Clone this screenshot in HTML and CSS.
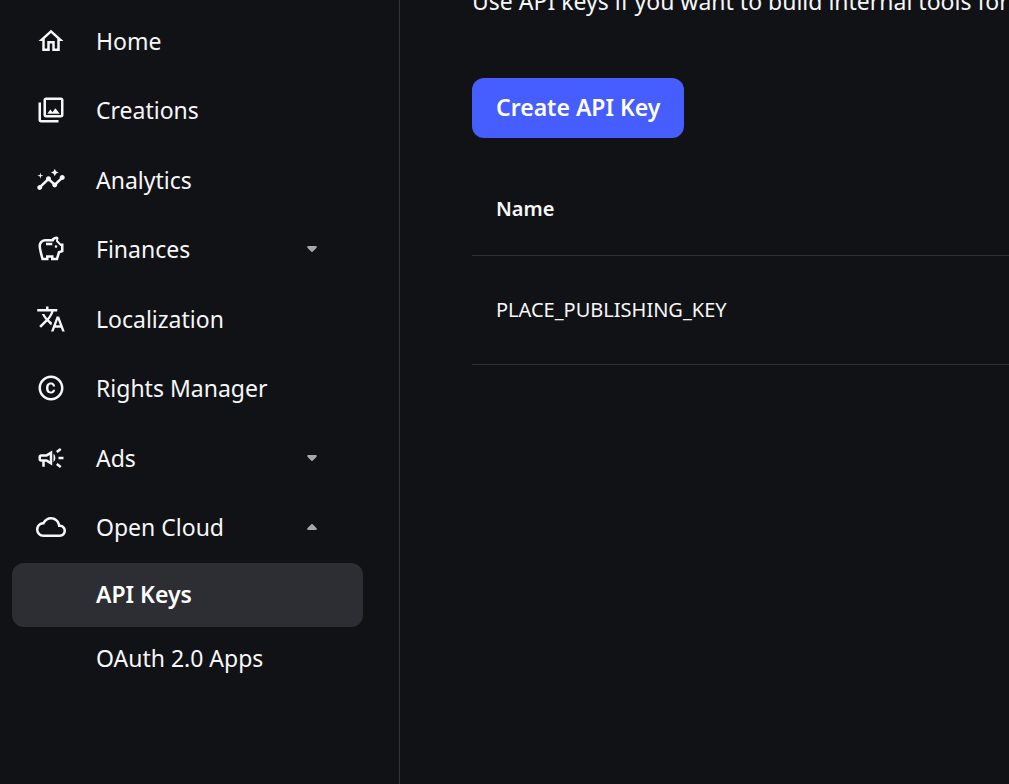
FILE: index.html
```html
<!DOCTYPE html>
<html lang="en">
<head>
<meta charset="utf-8">
<meta name="viewport" content="width=device-width, initial-scale=1">
<title>API Keys</title>
<link rel="stylesheet" href="styles.css">
</head>
<body>
<div class="layout">
  <nav class="sidebar" aria-label="Main">
    <ul class="menu">
      <li><a class="menu-item" href="#home"><svg class="icon" viewBox="0 0 24 24" aria-hidden="true"><path d="M12 5.69l5 4.5V18h-2v-6H9v6H7v-7.81l5-4.5M12 3L2 12h3v8h6v-6h2v6h6v-8h3L12 3z"/></svg><span>Home</span></a></li>
      <li><a class="menu-item" href="#creations"><svg class="icon" viewBox="0 0 24 24" aria-hidden="true"><path d="M20 4v12H8V4h12m0-2H8c-1.1 0-2 .9-2 2v12c0 1.1.9 2 2 2h12c1.1 0 2-.9 2-2V4c0-1.1-.9-2-2-2zM9 15l2.5-3.4 1.7 2.2 2.3-3.3L19 15zM2 6v14c0 1.1.9 2 2 2h14v-2H4V6H2z"/></svg><span>Creations</span></a></li>
      <li><a class="menu-item" href="#analytics"><svg class="icon" viewBox="0 0 24 24" aria-hidden="true"><path d="M21 8c-1.45 0-2.26 1.44-1.93 2.51l-3.55 3.56c-.3-.09-.74-.09-1.04 0l-2.55-2.55C12.27 10.45 11.46 9 10 9c-1.45 0-2.27 1.44-1.93 2.52l-4.56 4.55C2.44 15.74 1 16.55 1 18c0 1.1.9 2 2 2 1.45 0 2.26-1.44 1.93-2.51l4.55-4.56c.3.09.74.09 1.04 0l2.55 2.55C12.73 16.55 13.54 18 15 18c1.45 0 2.27-1.44 1.93-2.52l3.56-3.55c1.07.33 2.51-.48 2.51-1.93 0-1.1-.9-2-2-2z"/><path d="M15 9l.94-2.07L18 6l-2.06-.93L15 3l-.92 2.07L12 6l2.08.93zM3.5 11L4 9l2-.5L4 8l-.5-2L3 8l-2 .5L3 9z"/></svg><span>Analytics</span></a></li>
      <li><button class="menu-item" type="button" aria-expanded="false"><svg class="icon" viewBox="0 0 24 24" aria-hidden="true"><path d="M15 10c0-.55.45-1 1-1s1 .45 1 1-.45 1-1 1-1-.45-1-1zM8 9h5V7H8v2zm14-1.5v6.97l-2.82.94L17.5 21H12v-2h-2v2H4.5S2 12.54 2 9.5C2 6.46 4.46 4 7.5 4h5c.91-1.21 2.36-2 4-2 .83 0 1.5.67 1.5 1.5 0 .21-.04.4-.12.58-.14.34-.26.73-.32 1.15l2.27 2.27H22zm-2 2h-.5L16 6c0-.65.09-1.29.26-1.91-.97.25-1.76.93-2.19 1.91H7.5C5.57 6 4 7.57 4 9.5c0 1.88 1.22 6.65 2.01 9.5H8v-2h6v2h2.01l1.55-5.15 2.44-.82V9.5z"/></svg><span>Finances</span><svg class="caret" viewBox="0 0 10 6" aria-hidden="true"><path d="M1.2 0h7.6Q10.4.2 9.4 1.9L6.2 5.3Q5 6.5 3.8 5.3L.6 1.9Q-.4.2 1.2 0z"/></svg></button></li>
      <li><a class="menu-item" href="#localization"><svg class="icon" viewBox="0 0 24 24" aria-hidden="true"><path d="M12.87 15.07l-2.54-2.51.03-.03c1.74-1.94 2.98-4.17 3.71-6.53H17V4h-7V2H8v2H1v1.99h11.17C11.5 7.92 10.44 9.75 9 11.35 8.07 10.32 7.3 9.19 6.69 8h-2c.73 1.63 1.73 3.17 2.98 4.56l-5.09 5.02L4 19l5-5 3.11 3.11.76-2.04zM18.5 10h-2L12 22h2l1.12-3h4.75L21 22h2l-4.5-12zm-2.62 7l1.62-4.33L19.12 17h-3.24z"/></svg><span>Localization</span></a></li>
      <li><a class="menu-item" href="#rights"><svg class="icon" viewBox="0 0 24 24" aria-hidden="true"><path d="M10.08 10.86c.05-.33.16-.62.3-.87s.34-.46.59-.62c.24-.15.54-.22.91-.23.23.01.44.05.63.13.2.09.38.21.52.36s.25.33.34.53.13.42.14.64h1.79c-.02-.47-.11-.9-.28-1.29s-.4-.73-.7-1.01-.66-.5-1.08-.66-.88-.23-1.39-.23c-.65 0-1.22.11-1.7.34s-.88.53-1.2.92-.56.84-.71 1.36S8 11.29 8 11.87v.27c0 .58.08 1.12.23 1.64s.39.97.71 1.35.72.69 1.2.91c.48.22 1.05.34 1.7.34.47 0 .91-.08 1.32-.23s.77-.36 1.08-.63.56-.58.74-.94.29-.74.3-1.15h-1.79c-.01.21-.06.4-.15.58s-.21.33-.36.46-.32.23-.52.3c-.19.07-.39.09-.6.1-.36-.01-.66-.08-.89-.23-.25-.16-.45-.37-.59-.62s-.25-.55-.3-.88-.08-.67-.08-1v-.27c0-.35.03-.68.08-1.01zM12 2C6.48 2 2 6.48 2 12s4.48 10 10 10 10-4.48 10-10S17.52 2 12 2zm0 18c-4.41 0-8-3.59-8-8s3.59-8 8-8 8 3.59 8 8-3.59 8-8 8z"/></svg><span>Rights Manager</span></a></li>
      <li><button class="menu-item" type="button" aria-expanded="false"><svg class="icon" viewBox="0 0 24 24" aria-hidden="true"><path d="M18 11v2h4v-2h-4zm-2 6.61c.96.71 2.21 1.65 3.2 2.39.4-.53.8-1.07 1.2-1.6-.99-.74-2.24-1.68-3.2-2.4-.4.54-.8 1.08-1.2 1.61zM20.4 5.6c-.4-.53-.8-1.07-1.2-1.6-.99.74-2.24 1.68-3.2 2.4.4.53.8 1.07 1.2 1.6.96-.72 2.21-1.65 3.2-2.4zM4 9c-1.1 0-2 .9-2 2v2c0 1.1.9 2 2 2h1v4h2v-4h1l5 3V6L8 9H4zm5.03 1.71L11 9.53v4.94l-1.97-1.18-.48-.29H4v-2h4.55l.48-.29zM15.5 12c0-1.33-.58-2.53-1.5-3.35v6.69c.92-.81 1.5-2.01 1.5-3.34z"/></svg><span>Ads</span><svg class="caret" viewBox="0 0 10 6" aria-hidden="true"><path d="M1.2 0h7.6Q10.4.2 9.4 1.9L6.2 5.3Q5 6.5 3.8 5.3L.6 1.9Q-.4.2 1.2 0z"/></svg></button></li>
      <li><button class="menu-item" type="button" aria-expanded="true"><svg class="icon" viewBox="0 0 24 24" aria-hidden="true"><path d="M19.35 10.04C18.67 6.59 15.64 4 12 4 9.11 4 6.61 5.64 5.36 8.04 2.35 8.36 0 10.9 0 14c0 3.31 2.69 6 6 6h13c2.76 0 5-2.24 5-5 0-2.64-2.05-4.78-4.65-4.96zM19 18H6c-2.21 0-4-1.79-4-4 0-2.05 1.53-3.76 3.56-3.97l1.07-.11.5-.95C8.08 7.14 9.94 6 12 6c2.62 0 4.88 1.86 5.39 4.43l.3 1.5 1.53.11c1.56.1 2.78 1.41 2.78 2.96 0 1.65-1.35 3-3 3z"/></svg><span>Open Cloud</span><svg class="caret" viewBox="0 0 10 6" aria-hidden="true"><path d="M1.2 6h7.6Q10.4 5.8 9.4 4.1L6.2.7Q5-.5 3.8.7L.6 4.1Q-.4 5.8 1.2 6z"/></svg></button>
        <ul class="submenu">
          <li><a class="submenu-item is-active" href="#api-keys" aria-current="page">API Keys</a></li>
          <li><a class="submenu-item" href="#oauth">OAuth 2.0 Apps</a></li>
        </ul>
      </li>
    </ul>
  </nav>
  <main class="content">
    <p class="intro">Use API keys if you want to build internal tools for</p>
    <button class="create" type="button">Create API Key</button>
    <table class="keys">
      <thead><tr><th scope="col">Name</th></tr></thead>
      <tbody><tr><td>PLACE_PUBLISHING_KEY</td></tr></tbody>
    </table>
  </main>
</div>
</body>
</html>
```
FILE: styles.css
```css
* {
  box-sizing: border-box;
}

body {
  margin: 0;
  background: #111216;
  color: #f7f7f8;
  font-family: "Noto Sans", Roboto, sans-serif;
  font-size: 23px;
  line-height: 32px;
}

.layout {
  display: grid;
  grid-template-columns: 400px minmax(0, 1fr);
  height: 100vh;
  overflow: hidden;
}

.sidebar {
  padding: 6px 36px 24px 12px;
  border-right: 1px solid #34353a;
}

.menu,
.submenu {
  margin: 0;
  padding: 0;
  list-style: none;
}

.submenu {
  margin-top: 1px;
}

.menu-item {
  display: flex;
  align-items: center;
  gap: 30px;
  width: 100%;
  height: 69px;
  padding: 0 46px 0 24px;
  border: 0;
  background: none;
  color: inherit;
  font: inherit;
  font-weight: 450;
  text-align: left;
  text-decoration: none;
}

li:nth-child(even) > .menu-item {
  height: 70px;
}

.icon {
  flex: none;
  width: 30px;
  height: 30px;
  fill: currentColor;
}

.caret {
  flex: none;
  width: 10px;
  height: 6px;
  margin-left: auto;
  fill: #a6a7aa;
}

.submenu-item {
  display: block;
  padding: 15px 24px 17px 84px;
  border-radius: 12px;
  color: inherit;
  text-decoration: none;
}

.submenu-item.is-active {
  background: #2d2e33;
  color: #ffffff;
  font-weight: 650;
}

.content {
  padding-left: 72px;
}

.intro {
  margin: -15px 0 61px;
  white-space: nowrap;
}

.create {
  display: block;
  padding: 13px 24px 15px;
  border: 0;
  border-radius: 12px;
  background: #465eff;
  color: #ffffff;
  font: inherit;
  font-weight: 650;
}

.keys {
  width: 100%;
  margin-top: 24px;
  border-collapse: separate;
  border-spacing: 0;
  font-size: 20px;
  line-height: 28px;
  text-align: left;
}

.keys th,
.keys td {
  padding: 40px 24px;
  border-bottom: 1px solid #2f3034;
}

.keys td {
  font-weight: 450;
}

.keys th {
  padding-block: 33px 32px;
  font-weight: 650;
}
```
